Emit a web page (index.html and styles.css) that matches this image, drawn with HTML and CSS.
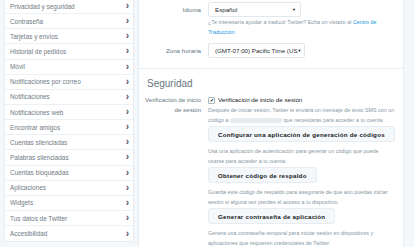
FILE: index.html
```html
<!DOCTYPE html>
<html lang="es">
<head>
  <meta charset="UTF-8" />
  <meta name="viewport" content="width=device-width, initial-scale=1.0" />
  <title>Configuración</title>
  <link rel="stylesheet" href="styles.css">
</head>
<body>
  <div class="page">
    <ul class="side-nav">
      <li>Privacidad y seguridad <span class="chev">&rsaquo;</span></li>
      <li>Contraseña <span class="chev">&rsaquo;</span></li>
      <li>Tarjetas y envíos <span class="chev">&rsaquo;</span></li>
      <li>Historial de pedidos <span class="chev">&rsaquo;</span></li>
      <li>Móvil <span class="chev">&rsaquo;</span></li>
      <li>Notificaciones por correo <span class="chev">&rsaquo;</span></li>
      <li>Notificaciones <span class="chev">&rsaquo;</span></li>
      <li>Notificaciones web <span class="chev">&rsaquo;</span></li>
      <li>Encontrar amigos <span class="chev">&rsaquo;</span></li>
      <li>Cuentas silenciadas <span class="chev">&rsaquo;</span></li>
      <li>Palabras silenciadas <span class="chev">&rsaquo;</span></li>
      <li>Cuentas bloqueadas <span class="chev">&rsaquo;</span></li>
      <li>Aplicaciones <span class="chev">&rsaquo;</span></li>
      <li>Widgets <span class="chev">&rsaquo;</span></li>
      <li>Tus datos de Twitter <span class="chev">&rsaquo;</span></li>
      <li>Accesibilidad <span class="chev">&rsaquo;</span></li>
    </ul>

    <div class="content">
      <div class="field">
        <div class="label">Idioma</div>
        <div class="control">
          <div class="select select-lang">Español <span class="caret">&#9660;</span></div>
          <p class="hint">¿Te interesaría ayudar a traducir Twitter? Echa un vistazo al <a href="#">Centro de Traducción</a>.</p>
        </div>
      </div>
      <div class="field field-tz">
        <div class="label">Zona horaria</div>
        <div class="control">
          <div class="select select-tz"><span>(GMT-07:00) Pacific Time (US</span> <span class="caret">&#9660;</span></div>
        </div>
      </div>

      <div class="section">
        <h2>Seguridad</h2>
        <div class="field">
          <div class="label">Verificación de inicio de sesión</div>
          <div class="control">
            <label class="check"><span class="box">&#10004;</span> Verificación de inicio de sesión</label>
            <p class="hint">Después de iniciar sesión, Twitter te enviará un mensaje de texto SMS con un código a <span class="blur"></span> que necesitarás para acceder a tu cuenta.</p>
            <button class="btn">Configurar una aplicación de generación de códigos</button>
            <p class="hint">Usa una aplicación de autenticación para generar un código que puede usarse para acceder a tu cuenta.</p>
            <button class="btn">Obtener código de respaldo</button>
            <p class="hint">Guarda este código de respaldo para asegurarte de que aún puedas iniciar sesión si alguna vez pierdes el acceso a tu dispositivo.</p>
            <button class="btn">Generar contraseña de aplicación</button>
            <p class="hint">Genera una contraseña temporal para iniciar sesión en dispositivos y aplicaciones que requieren credenciales de Twitter.</p>
          </div>
        </div>
      </div>
    </div>
  </div>
</body>
</html>
```

FILE: styles.css
```css
body {
  margin: 0;
  background: #f5f8fa;
  font-family: "Liberation Sans", Arial, sans-serif;
  color: #66757f;
}
.page {
  display: flex;
  align-items: flex-start;
  gap: 4px;
  padding-left: 4px;
  height: 247px;
  overflow: hidden;
}
.side-nav {
  list-style: none;
  margin: -1px 0 0;
  padding: 0;
  width: 130px;
  background: #fff;
  border: 1px solid #e6ecf0;
  border-top: none;
  box-sizing: border-box;
}
.side-nav li {
  display: flex;
  justify-content: space-between;
  align-items: center;
  height: 15.15px;
  box-sizing: border-box;
  padding: 0 4px 0 5px;
  border-bottom: 1px solid #edf1f4;
  font-size: 6.4px;
  color: #6f7b85;
}
.side-nav li:last-child {
  border-bottom: none;
}
.chev {
  font-size: 10px;
  font-weight: bold;
  color: #4a5560;
  line-height: 1;
}
.content {
  width: 266px;
  height: 247px;
  background: #fff;
  border-left: 1px solid #e6ecf0;
  border-right: 1px solid #e6ecf0;
  box-sizing: border-box;
  padding-top: 2px;
}
.field {
  display: flex;
  gap: 7px;
}
.field-tz {
  margin-top: 6px;
}
.label {
  width: 62px;
  text-align: right;
  font-size: 6.2px;
  line-height: 10px;
  color: #66757f;
  flex-shrink: 0;
  padding-top: 2.5px;
}
.control {
  flex: 1;
  padding-right: 8px;
}
.select {
  display: flex;
  justify-content: space-between;
  align-items: center;
  height: 15px;
  box-sizing: border-box;
  padding: 0 4px 0 6px;
  border: 1px solid #e1e8ed;
  border-radius: 2px;
  font-size: 6.2px;
  color: #292f33;
  white-space: nowrap;
}
.select-lang { width: 93px; }
.select-tz { width: 97px; }
.caret {
  font-size: 4px;
  color: #14171a;
}
.hint {
  margin: 0;
  font-size: 5.4px;
  line-height: 10px;
  color: #8899a6;
}
.hint a {
  color: #1b95e0;
  text-decoration: none;
}
.blur {
  display: inline-block;
  width: 52px;
  height: 5px;
  background: #e6ebef;
  border-radius: 2px;
  vertical-align: middle;
}
.section {
  border-top: 1px solid #e6ecf0;
  margin-top: 10px;
  padding-top: 8px;
}
.section h2 {
  margin: 0 0 5px 8px;
  font-weight: normal;
  font-size: 10px;
  line-height: 13px;
  color: #66757f;
}
.section .label {
  padding-top: 0;
}
.check {
  display: flex;
  align-items: center;
  gap: 3px;
  font-size: 6.2px;
  line-height: 10px;
  color: #14171a;
}
.box {
  width: 5px;
  height: 5px;
  border: 1px solid #aab8c2;
  border-radius: 1px;
  font-size: 4.5px;
  line-height: 5px;
  text-align: center;
  color: #14171a;
}
.btn {
  display: block;
  height: 16px;
  margin: 1px 0 4px;
  padding: 0 9px;
  background: #f5f8fa;
  border: 1px solid #e6ecf0;
  border-radius: 3px;
  font-family: inherit;
  font-weight: bold;
  font-size: 6.2px;
  color: #14171a;
  letter-spacing: 0.25px;
  white-space: nowrap;
}
```
